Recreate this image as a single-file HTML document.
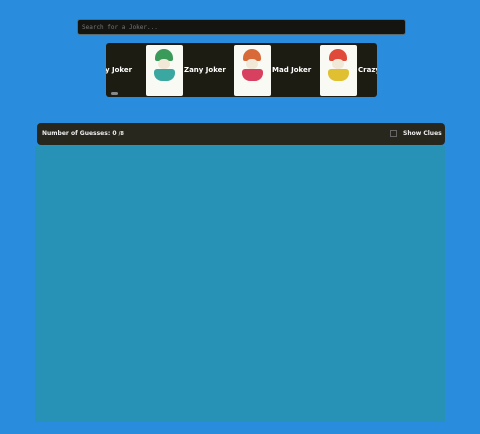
<!DOCTYPE html>
<html><head><style>
body{margin:0;width:480px;height:434px;background:#2a8cdc;font-family:"DejaVu Sans Mono","Liberation Mono",monospace;overflow:hidden;position:relative}
.search{position:absolute;left:77px;top:19px;width:329px;height:16px;background:#141410;border:1px solid #5a6a6a;border-radius:3px;color:#777;font-size:6px;line-height:16px;padding-left:4px;box-sizing:border-box}
.car{position:absolute;left:106px;top:43px;width:271px;height:54px;background:#1c1c12;border-radius:3px;overflow:hidden}
.card{position:absolute;top:2px;width:37px;height:51px;background:#fafaf5;border-radius:2px}
.card .hat{position:absolute;left:9px;top:4px;width:18px;height:12px;border-radius:9px 9px 2px 2px}
.card .face{position:absolute;left:12px;top:14px;width:12px;height:10px;background:#f2e8d8;border-radius:5px}
.card .body{position:absolute;left:8px;top:24px;width:21px;height:12px;border-radius:3px 3px 8px 8px}
.lbl{position:absolute;top:23px;color:#fff;font-size:7px;font-weight:bold;font-family:"DejaVu Sans",sans-serif}
.panel{position:absolute;left:37px;top:123px;width:408px;height:22px;background:#28271e;border-radius:4px;color:#eee;font-size:6px;font-family:"DejaVu Sans",sans-serif;font-weight:bold}
.main{position:absolute;left:35px;top:146px;width:410px;height:276px;background:#2792b6}
</style></head><body>
<div class="search">Search for a Joker...</div>
<div class="car">
<div class="lbl" style="left:-1px">y Joker</div>
<div class="card" style="left:40px"><div class="hat" style="background:#3a9a5a"></div><div class="face"></div><div class="body" style="background:#3aa8a0"></div></div>
<div class="lbl" style="left:78px">Zany Joker</div>
<div class="card" style="left:128px"><div class="hat" style="background:#d86a3a"></div><div class="face"></div><div class="body" style="background:#d84060"></div></div>
<div class="lbl" style="left:166px">Mad Joker</div>
<div class="card" style="left:214px"><div class="hat" style="background:#e04a3a"></div><div class="face"></div><div class="body" style="background:#e0c030"></div></div>
<div class="lbl" style="left:252px">Crazy</div>
<div style="position:absolute;left:5px;top:49px;width:7px;height:3px;background:#888;border-radius:2px"></div>
</div>
<div class="panel"><span style="position:absolute;left:5px;top:7px">Number of Guesses: 0 <span style="font-size:5px">/8</span></span>
<span style="position:absolute;left:353px;top:7px;width:7px;height:7px;border:1px solid #666;box-sizing:border-box"></span>
<span style="position:absolute;left:366px;top:7px">Show Clues</span></div>
<div class="main"></div>
</body></html>
